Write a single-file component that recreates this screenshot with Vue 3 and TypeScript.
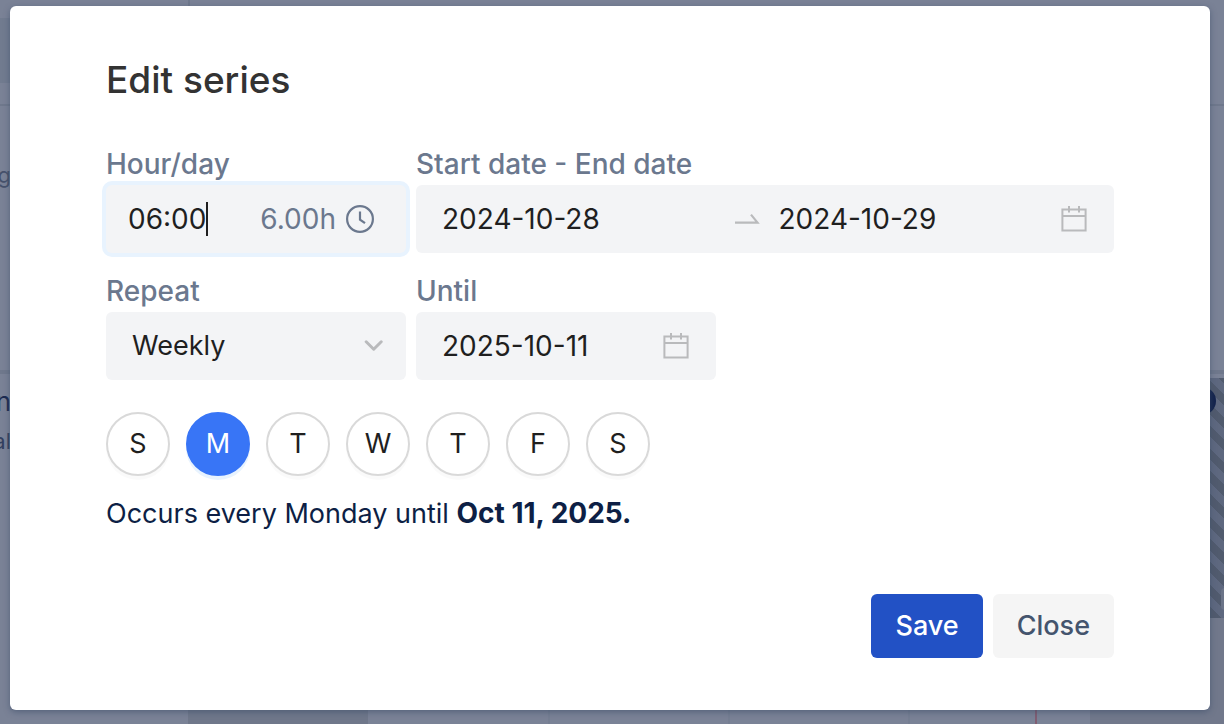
<script setup lang="ts">
import { ref } from 'vue'

interface Day {
  key: string
  letter: string
  name: string
}

const days: Day[] = [
  { key: 'sun', letter: 'S', name: 'Sunday' },
  { key: 'mon', letter: 'M', name: 'Monday' },
  { key: 'tue', letter: 'T', name: 'Tuesday' },
  { key: 'wed', letter: 'W', name: 'Wednesday' },
  { key: 'thu', letter: 'T', name: 'Thursday' },
  { key: 'fri', letter: 'F', name: 'Friday' },
  { key: 'sat', letter: 'S', name: 'Saturday' },
]

const hours = ref<string>('06:00')
const startDate = ref<string>('2024-10-28')
const endDate = ref<string>('2024-10-29')
const repeat = ref<string>('Weekly')
const until = ref<string>('2025-10-11')
const selected = ref<string>('mon')
</script>

<template>
  <div class="page">
    <div class="backdrop" aria-hidden="true">
      <div class="block top-left"></div>
      <div class="line head-v"></div>
      <div class="line head-h"></div>
      <div class="line row-h"></div>
      <div class="block weekend"></div>
      <div class="line day-line day-a"></div>
      <div class="line day-line day-b"></div>
      <div class="line day-line day-c"></div>
      <div class="line today"></div>
      <div class="block last"></div>
      <div class="block side"></div>
      <div class="stripes"><i class="dot"></i><i class="chip"></i></div>
      <span class="peek peek-a">ng</span>
      <span class="peek peek-b">n</span>
      <span class="peek peek-c">al</span>
    </div>

    <form class="modal" role="dialog" aria-labelledby="title" @submit.prevent>
      <h1 id="title">Edit series</h1>

      <div class="grid">
        <div class="group">
          <label for="hours">Hour/day</label>
          <div class="field focused">
            <input id="hours" v-model="hours" class="hours" type="text" />
            <span class="caret"></span>
            <span class="total">6.00h</span>
            <svg class="clock" viewBox="0 0 28 28" fill="none" stroke="currentColor" stroke-width="2.2">
              <circle cx="14" cy="14" r="12.9" />
              <path d="M14 6.5V14.6L19 18.2" />
            </svg>
          </div>
        </div>

        <div class="group">
          <label for="start">Start date - End date</label>
          <div class="field range">
            <input id="start" v-model="startDate" type="text" />
            <svg class="arrow" viewBox="0 0 26 12" fill="none" stroke="currentColor" stroke-width="2.2">
              <path d="M1 9.6H23.5L17 1.6" />
            </svg>
            <input v-model="endDate" type="text" aria-label="End date" />
            <svg class="calendar" viewBox="0 0 28 28" fill="none" stroke="currentColor" stroke-width="2">
              <path d="M2.4 4.5H25.6V25.4H2.4ZM2.4 11H25.6M9 1V7.5M19 1V7.5" />
            </svg>
          </div>
        </div>

        <div class="group">
          <label for="repeat">Repeat</label>
          <div class="field select">
            <select id="repeat" v-model="repeat">
              <option>Daily</option>
              <option>Weekly</option>
              <option>Monthly</option>
            </select>
            <svg class="chevron" viewBox="0 0 20 12" fill="none" stroke="currentColor" stroke-width="3" stroke-linecap="round" stroke-linejoin="round">
              <path d="M2.2 1.8L9.7 9.2L17.2 1.8" />
            </svg>
          </div>
        </div>

        <div class="group short">
          <label for="until">Until</label>
          <div class="field">
            <input id="until" v-model="until" type="text" />
            <svg class="calendar" viewBox="0 0 28 28" fill="none" stroke="currentColor" stroke-width="2">
              <path d="M2.4 4.5H25.6V25.4H2.4ZM2.4 11H25.6M9 1V7.5M19 1V7.5" />
            </svg>
          </div>
        </div>
      </div>

      <div class="days">
        <button
          v-for="day in days"
          :key="day.key"
          type="button"
          class="day"
          :class="{ on: selected === day.key }"
          :aria-label="day.name"
          :aria-pressed="selected === day.key"
          @click="selected = day.key"
        >
          {{ day.letter }}
        </button>
      </div>

      <p class="summary">Occurs every Monday until <strong>Oct 11, 2025.</strong></p>

      <div class="actions">
        <button type="submit" class="save">Save</button>
        <button type="button" class="close">Close</button>
      </div>
    </form>
  </div>
</template>

<style>
body {
  margin: 0;
}
</style>

<style scoped>
.page,
.page * {
  box-sizing: border-box;
}
.page {
  position: relative;
  min-height: 100vh;
  padding: 6px 14px 14px 10px;
  overflow: hidden;
  background: #7a8296;
  font-family: Inter, "Liberation Sans", sans-serif;
  font-size: 28px;
  line-height: 42px;
  color: #1f1f1f;
}
.backdrop {
  position: absolute;
  inset: 0;
}
.backdrop > *,
.dot,
.chip {
  position: absolute;
}
.line {
  background: #6f788c;
}
.top-left { left: 0; top: 18px; width: 10px; height: 65px; background: #717b8f; }
.head-v { left: 188px; top: 0; width: 2px; height: 6px; }
.head-h { left: 0; right: 0; top: 104px; height: 2px; }
.row-h { left: 0; right: 0; top: 370px; height: 4px; }
.weekend { left: 188px; bottom: 0; width: 180px; height: 14px; background: #6f778a; }
.day-line { bottom: 0; width: 2px; height: 14px; background: #757e92; }
.day-a { left: 548px; }
.day-b { left: 728px; }
.day-c { left: 908px; }
.today { left: 1035px; bottom: 0; width: 2px; height: 14px; background: #805d72; }
.last { left: 1090px; right: 0; bottom: 0; height: 14px; background: #71788b; }
.side { right: 0; top: 618px; width: 14px; bottom: 0; background: #71788b; }
.stripes {
  right: 0;
  top: 378px;
  width: 14px;
  height: 240px;
  overflow: hidden;
  background: repeating-linear-gradient(45deg, #515b6e 0 8px, #5e687f 8px 16px);
}
.dot { right: 8px; top: 9px; width: 28px; height: 28px; border-radius: 50%; background: #13234c; }
.chip { right: -17px; top: 210px; width: 20px; height: 22px; border-radius: 4px; background: #6b7488; }
.peek { left: 0; width: 11px; display: flex; justify-content: flex-end; color: #1b2a50; }
.peek-a { top: 160px; font-size: 22px; line-height: 30px; color: #46516b; }
.peek-b { top: 386px; font-size: 26px; line-height: 32px; }
.peek-c { top: 426px; font-size: 22px; line-height: 30px; color: #33405f; }

.modal {
  position: relative;
  min-height: calc(100vh - 20px);
  padding: 50px 96px 52px;
  display: flex;
  flex-direction: column;
  background: #fff;
  border-radius: 6px;
  box-shadow: 0 2px 6px rgba(60, 76, 105, 0.6);
}
h1 {
  margin: 0 0 39px;
  font-size: 37px;
  line-height: 48px;
  font-weight: 500;
  color: #333;
}
.grid {
  display: grid;
  grid-template-columns: 300px 1fr;
  gap: 17px 10px;
}
.group {
  display: flex;
  flex-direction: column;
  min-width: 0;
}
.short {
  max-width: 300px;
}
label {
  color: #6b788e;
  font-weight: 500;
}
.field {
  height: 68px;
  padding: 0 26px;
  display: flex;
  align-items: center;
  background: #f3f4f6;
  border-radius: 6px;
}
.focused {
  padding: 0 32px 0 22px;
  box-shadow: 0 0 0 4px #e8f3fe;
}
input,
select {
  flex: 1;
  min-width: 0;
  width: 0;
  height: 42px;
  margin: 0;
  padding: 0;
  border: 0;
  outline: 0;
  background: transparent;
  font: inherit;
  color: inherit;
  appearance: none;
}
select {
  font-size: 27px;
}
.hours {
  flex: none;
  width: auto;
  field-sizing: content;
}
.caret {
  width: 2px;
  height: 34px;
  background: #1f1f1f;
}
.total {
  margin-left: auto;
  color: #6b788e;
}
svg {
  display: block;
  flex: none;
}
.clock {
  width: 28px;
  height: 28px;
  margin-left: 10px;
  color: #6b788e;
}
.arrow {
  width: 26px;
  height: 12px;
  margin: 0 19px 0 10px;
  color: #b9babc;
}
.calendar {
  width: 28px;
  height: 28px;
  color: #b9babc;
}
.select {
  position: relative;
}
.chevron {
  position: absolute;
  right: 22px;
  width: 20px;
  height: 12px;
  color: #b9babc;
  pointer-events: none;
}
.days {
  display: flex;
  gap: 16px;
  margin-top: 32px;
}
button {
  padding: 0;
  font: inherit;
  cursor: pointer;
}
.day {
  width: 64px;
  height: 64px;
  border: 2px solid #d9d9d9;
  border-radius: 50%;
  background: #fff;
  color: #1f1f1f;
  font-size: 27px;
  box-shadow: 0 4px 0 rgba(0, 0, 0, 0.02);
}
.day.on {
  border-color: #3875f6;
  background: #3875f6;
  color: #fff;
  box-shadow: 0 4px 0 #e8f3fe;
}
.summary {
  margin: 16px 0 0;
  font-size: 27px;
  color: #0d1f45;
}
.summary strong {
  font-size: 28px;
  font-weight: 700;
}
.actions {
  margin-top: auto;
  display: flex;
  justify-content: flex-end;
  gap: 10px;
}
.actions button {
  height: 64px;
  padding: 0 24px;
  border: 0;
  border-radius: 6px;
  font-size: 27px;
  font-weight: 500;
}
.actions .save {
  background: #2251c5;
  color: #fff;
}
.actions .close {
  background: #f5f5f5;
  color: #44546d;
}
</style>
